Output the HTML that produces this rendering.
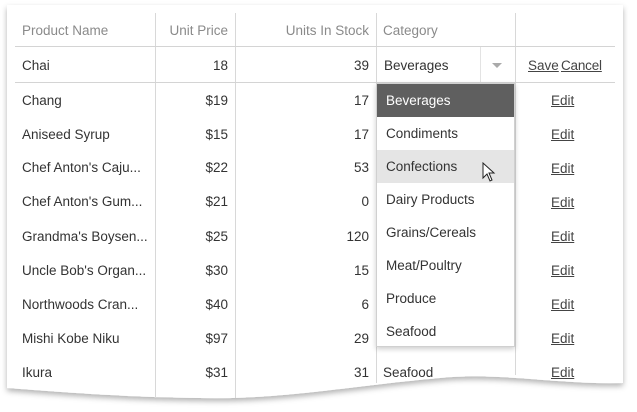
<!DOCTYPE html>
<html><head><style>
body{margin:0;width:637px;height:412px;background:#fff;position:relative;overflow:hidden;font-family:"Liberation Sans",sans-serif;font-size:13.5px;color:#333}
.a{position:absolute;white-space:nowrap;line-height:16px}
.h{color:#8a8a8a}
.r{text-align:right}
.v{position:absolute;width:1px;background:#d8d8d8;top:13px;height:385px}
.hl{position:absolute;height:1px;background:#d4d4d4;left:15px;width:600px}
.e{position:absolute;left:551px;text-decoration:underline;color:#444}
.dd{position:absolute;left:376px;top:83px;width:139px;height:264px;background:#fff;border:1px solid #d0d0d0;box-sizing:border-box;box-shadow:0 2px 5px rgba(0,0,0,.2)}
.it{height:33px;line-height:33px;padding-left:9px}
</style></head><body>
<svg width="637" height="412" style="position:absolute;left:0;top:0">
<defs><filter id="s" x="-5%" y="-5%" width="110%" height="115%"><feDropShadow dx="0" dy="3" stdDeviation="3" flood-color="#000" flood-opacity="0.3"/></filter></defs>
<path d="M7 5 H623 V383 C560 385 500 372 440 378 C350 386 280 400 200 398 C120 397 60 392 7 388 Z" fill="#fff" filter="url(#s)"/>
</svg>
<div class="v" style="left:155px"></div>
<div class="v" style="left:235px"></div>
<div class="v" style="left:376px;height:370px"></div>
<div class="v" style="left:515px;height:362px"></div>
<div class="hl" style="top:46px"></div>
<div class="hl" style="top:82px"></div>
<div style="position:absolute;left:480px;top:47px;width:1px;height:35px;background:#e3e3e3"></div>

<div class="a h" style="left:22px;top:23px">Product Name</div>
<div class="a h r" style="left:155px;width:73px;top:23px">Unit Price</div>
<div class="a h r" style="left:235px;width:134px;top:23px">Units In Stock</div>
<div class="a h" style="left:383px;top:23px">Category</div>

<div class="a" style="left:22px;top:58px">Chai</div>
<div class="a r" style="left:155px;width:73px;top:58px">18</div>
<div class="a r" style="left:235px;width:134px;top:58px">39</div>
<div class="a" style="left:384px;top:58px">Beverages</div>
<div style="position:absolute;left:492px;top:63px;border-left:5px solid transparent;border-right:5px solid transparent;border-top:5px solid #aaa"></div>
<div class="a" style="left:528px;top:58px;text-decoration:underline;color:#444">Save</div>
<div class="a" style="left:561px;top:58px;text-decoration:underline;color:#444;letter-spacing:-0.2px">Cancel</div>

<div class="a" style="left:22px;top:93px">Chang</div><div class="a r" style="left:155px;width:73px;top:93px">$19</div><div class="a r" style="left:235px;width:134px;top:93px">17</div><div class="a e" style="top:93px">Edit</div>
<div class="a" style="left:22px;top:127px">Aniseed Syrup</div><div class="a r" style="left:155px;width:73px;top:127px">$15</div><div class="a r" style="left:235px;width:134px;top:127px">17</div><div class="a e" style="top:127px">Edit</div>
<div class="a" style="left:22px;top:160px">Chef Anton's Caju...</div><div class="a r" style="left:155px;width:73px;top:160px">$22</div><div class="a r" style="left:235px;width:134px;top:160px">53</div><div class="a e" style="top:161px">Edit</div>
<div class="a" style="left:22px;top:194px">Chef Anton's Gum...</div><div class="a r" style="left:155px;width:73px;top:194px">$21</div><div class="a r" style="left:235px;width:134px;top:194px">0</div><div class="a e" style="top:195px">Edit</div>
<div class="a" style="left:22px;top:229px">Grandma's Boysen...</div><div class="a r" style="left:155px;width:73px;top:229px">$25</div><div class="a r" style="left:235px;width:134px;top:229px">120</div><div class="a e" style="top:229px">Edit</div>
<div class="a" style="left:22px;top:263px">Uncle Bob's Organ...</div><div class="a r" style="left:155px;width:73px;top:263px">$30</div><div class="a r" style="left:235px;width:134px;top:263px">15</div><div class="a e" style="top:263px">Edit</div>
<div class="a" style="left:22px;top:297px">Northwoods Cran...</div><div class="a r" style="left:155px;width:73px;top:297px">$40</div><div class="a r" style="left:235px;width:134px;top:297px">6</div><div class="a e" style="top:297px">Edit</div>
<div class="a" style="left:22px;top:331px">Mishi Kobe Niku</div><div class="a r" style="left:155px;width:73px;top:331px">$97</div><div class="a r" style="left:235px;width:134px;top:331px">29</div><div class="a e" style="top:331px">Edit</div>
<div class="a" style="left:22px;top:365px">Ikura</div><div class="a r" style="left:155px;width:73px;top:365px">$31</div><div class="a r" style="left:235px;width:134px;top:365px">31</div><div class="a" style="left:383px;top:365px">Seafood</div><div class="a e" style="top:365px">Edit</div>

<div class="dd">
<div class="it" style="background:#5f5f5f;color:#fff">Beverages</div>
<div class="it">Condiments</div>
<div class="it" style="background:#e5e5e5">Confections</div>
<div class="it">Dairy Products</div>
<div class="it">Grains/Cereals</div>
<div class="it">Meat/Poultry</div>
<div class="it">Produce</div>
<div class="it">Seafood</div>
</div>
<svg width="16" height="22" style="position:absolute;left:482px;top:162px"><path d="M1 1 L1 16 L5 12 L8 19 L10 18 L7 11 L12 11 Z" fill="#fff" stroke="#222" stroke-width="1"/></svg>
</body></html>
